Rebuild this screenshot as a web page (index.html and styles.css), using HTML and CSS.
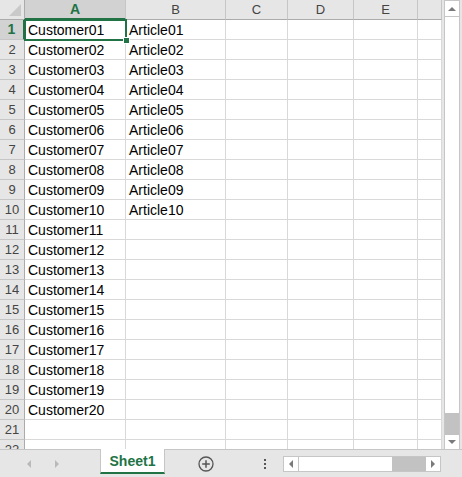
FILE: index.html
```html
<!DOCTYPE html>
<html>
<head>
<meta charset="utf-8">
<link rel="stylesheet" href="styles.css">
</head>
<body>
<div class="app">
  <div class="main">
    <div class="sheet">
      <div class="grid">
        <div class="corner"><span class="tri"></span></div>
        <div class="ch selh">A</div><div class="ch">B</div><div class="ch">C</div><div class="ch">D</div><div class="ch">E</div><div class="ch"></div>

        <div class="rh selr">1</div><div class="c sel">Customer01<span class="selbox"></span></div><div class="c">Article01</div><div class="c"></div><div class="c"></div><div class="c"></div><div class="c"></div>
        <div class="rh">2</div><div class="c">Customer02</div><div class="c">Article02</div><div class="c"></div><div class="c"></div><div class="c"></div><div class="c"></div>
        <div class="rh">3</div><div class="c">Customer03</div><div class="c">Article03</div><div class="c"></div><div class="c"></div><div class="c"></div><div class="c"></div>
        <div class="rh">4</div><div class="c">Customer04</div><div class="c">Article04</div><div class="c"></div><div class="c"></div><div class="c"></div><div class="c"></div>
        <div class="rh">5</div><div class="c">Customer05</div><div class="c">Article05</div><div class="c"></div><div class="c"></div><div class="c"></div><div class="c"></div>
        <div class="rh">6</div><div class="c">Customer06</div><div class="c">Article06</div><div class="c"></div><div class="c"></div><div class="c"></div><div class="c"></div>
        <div class="rh">7</div><div class="c">Customer07</div><div class="c">Article07</div><div class="c"></div><div class="c"></div><div class="c"></div><div class="c"></div>
        <div class="rh">8</div><div class="c">Customer08</div><div class="c">Article08</div><div class="c"></div><div class="c"></div><div class="c"></div><div class="c"></div>
        <div class="rh">9</div><div class="c">Customer09</div><div class="c">Article09</div><div class="c"></div><div class="c"></div><div class="c"></div><div class="c"></div>
        <div class="rh">10</div><div class="c">Customer10</div><div class="c">Article10</div><div class="c"></div><div class="c"></div><div class="c"></div><div class="c"></div>
        <div class="rh">11</div><div class="c">Customer11</div><div class="c"></div><div class="c"></div><div class="c"></div><div class="c"></div><div class="c"></div>
        <div class="rh">12</div><div class="c">Customer12</div><div class="c"></div><div class="c"></div><div class="c"></div><div class="c"></div><div class="c"></div>
        <div class="rh">13</div><div class="c">Customer13</div><div class="c"></div><div class="c"></div><div class="c"></div><div class="c"></div><div class="c"></div>
        <div class="rh">14</div><div class="c">Customer14</div><div class="c"></div><div class="c"></div><div class="c"></div><div class="c"></div><div class="c"></div>
        <div class="rh">15</div><div class="c">Customer15</div><div class="c"></div><div class="c"></div><div class="c"></div><div class="c"></div><div class="c"></div>
        <div class="rh">16</div><div class="c">Customer16</div><div class="c"></div><div class="c"></div><div class="c"></div><div class="c"></div><div class="c"></div>
        <div class="rh">17</div><div class="c">Customer17</div><div class="c"></div><div class="c"></div><div class="c"></div><div class="c"></div><div class="c"></div>
        <div class="rh">18</div><div class="c">Customer18</div><div class="c"></div><div class="c"></div><div class="c"></div><div class="c"></div><div class="c"></div>
        <div class="rh">19</div><div class="c">Customer19</div><div class="c"></div><div class="c"></div><div class="c"></div><div class="c"></div><div class="c"></div>
        <div class="rh">20</div><div class="c">Customer20</div><div class="c"></div><div class="c"></div><div class="c"></div><div class="c"></div><div class="c"></div>
        <div class="rh">21</div><div class="c"></div><div class="c"></div><div class="c"></div><div class="c"></div><div class="c"></div><div class="c"></div>
        <div class="rh">22</div><div class="c"></div><div class="c"></div><div class="c"></div><div class="c"></div><div class="c"></div><div class="c"></div>
      </div>
    </div>
    <div class="vscroll">
      <div class="sbtn up"><span class="arr-up"></span></div>
      <div class="vtrack"></div>
      <div class="vthumb"></div>
      <div class="sbtn down"><span class="arr-down"></span></div>
    </div>
  </div>
  <div class="bottom">
    <div class="nav">
      <span class="arr-left nav-l"></span>
      <span class="arr-right nav-r"></span>
    </div>
    <div class="tab">Sheet1</div>
    <div class="addarea">
      <svg class="plus" width="16" height="16" viewBox="0 0 16 16">
        <circle cx="8" cy="8" r="7" fill="none" stroke="#555" stroke-width="1.3"/>
        <path d="M8 4.2V11.8M4.2 8H11.8" stroke="#555" stroke-width="1.5"/>
      </svg>
    </div>
    <div class="dots"><span></span><span></span><span></span></div>
    <div class="hscroll">
      <div class="hbtn"><span class="arr-left"></span></div>
      <div class="htrack"></div>
      <div class="hthumb"></div>
      <div class="hbtn"><span class="arr-right"></span></div>
    </div>
  </div>
</div>
</body>
</html>
```

FILE: styles.css
```css
html, body {
  margin: 0;
  padding: 0;
  width: 462px;
  height: 477px;
  overflow: hidden;
  background: #e6e6e6;
}
.app {
  width: 462px;
  height: 477px;
  display: flex;
  flex-direction: column;
  font-family: "Liberation Sans", Arial, sans-serif;
}
.main {
  display: flex;
  height: 449px;
}
.sheet {
  width: 442px;
  height: 449px;
  overflow: hidden;
  background: #fff;
}
.grid {
  display: grid;
  grid-template-columns: 25px 101px 100px 62px 66px 64px 24px;
  grid-auto-rows: 20px;
}
.grid > div {
  box-sizing: border-box;
  border-right: 1px solid #d9d9d9;
  border-bottom: 1px solid #d9d9d9;
}
.corner {
  background: #e6e6e6;
  position: relative;
  border-right-color: #ababab !important;
  border-bottom-color: #ababab !important;
}
.tri {
  position: absolute;
  right: 3px;
  bottom: 3px;
  width: 0;
  height: 0;
  border-left: 12px solid transparent;
  border-bottom: 12px solid #c9c9c9;
}
.ch {
  background: #e6e6e6;
  color: #444;
  font-size: 13px;
  text-align: center;
  line-height: 19px;
  border-right-color: #c6c6c6 !important;
  border-bottom-color: #ababab !important;
}
.selh {
  background: #d2d2d2;
  color: #217346;
  font-weight: bold;
  font-size: 14px;
  border-bottom: 2px solid #217346 !important;
  line-height: 18px;
}
.rh {
  background: #e6e6e6;
  color: #444;
  font-size: 13px;
  text-align: center;
  line-height: 19px;
  border-right-color: #ababab !important;
  border-bottom-color: #c6c6c6 !important;
}
.selr {
  background: #d2d2d2;
  color: #217346;
  font-weight: bold;
  font-size: 14px;
  border-right: 2px solid #217346 !important;
}
.c {
  font-size: 14px;
  color: #000;
  padding-left: 3px;
  line-height: 20px;
  white-space: nowrap;
  overflow: visible;
}
.sel {
  position: relative;
}
.selbox {
  position: absolute;
  left: -1px;
  top: -1px;
  right: -2px;
  bottom: -2px;
  border: 2px solid #217346;
}
.selbox::after {
  content: "";
  position: absolute;
  right: -5px;
  bottom: -5px;
  width: 5px;
  height: 5px;
  background: #217346;
  border: 1px solid #fff;
}
.vscroll {
  width: 16px;
  margin-left: 2px;
  height: 449px;
  display: flex;
  flex-direction: column;
  box-sizing: border-box;
  border: 1px solid #c6c6c6;
  border-bottom: none;
  background: #fff;
}
.sbtn {
  height: 15px;
  display: flex;
  align-items: center;
  justify-content: center;
  background: #fff;
}
.up { border-bottom: 1px solid #c6c6c6; }
.down { height: 14px; }
.vtrack { flex: 1; background: #fff; }
.vthumb { height: 22px; background: #c2c2c2; }
.arr-up {
  width: 0; height: 0;
  border-left: 4px solid transparent;
  border-right: 4px solid transparent;
  border-bottom: 4px solid #7a7a7a;
}
.arr-down {
  width: 0; height: 0;
  border-left: 4px solid transparent;
  border-right: 4px solid transparent;
  border-top: 4px solid #7a7a7a;
}
.arr-left {
  width: 0; height: 0;
  border-top: 4px solid transparent;
  border-bottom: 4px solid transparent;
  border-right: 4px solid #7a7a7a;
}
.arr-right {
  width: 0; height: 0;
  border-top: 4px solid transparent;
  border-bottom: 4px solid transparent;
  border-left: 4px solid #7a7a7a;
}
.bottom {
  height: 28px;
  box-sizing: border-box;
  border-top: 1px solid #c6c6c6;
  display: flex;
  align-items: flex-start;
}
.nav {
  width: 100px;
  height: 27px;
  display: flex;
  align-items: center;
  padding-left: 27px;
  box-sizing: border-box;
  gap: 24px;
}
.nav .arr-left, .nav .arr-right {
  border-right-color: #b9b9b9;
  border-left-color: #b9b9b9;
}
.tab {
  width: 65px;
  height: 25px;
  margin-top: -1px;
  box-sizing: border-box;
  background: #fff;
  color: #217346;
  font-weight: bold;
  font-size: 14px;
  text-align: center;
  line-height: 24px;
  border-bottom: 2px solid #217346;
  border-left: 1px solid #c6c6c6;
  border-right: 1px solid #c6c6c6;
}
.addarea {
  width: 82px;
  height: 27px;
  display: flex;
  align-items: center;
  justify-content: center;
}
.dots {
  width: 36px;
  height: 27px;
  display: flex;
  flex-direction: column;
  align-items: center;
  justify-content: center;
  gap: 2px;
}
.dots span {
  width: 2px;
  height: 2px;
  background: #555;
}
.hscroll {
  margin-top: 6px;
  width: 158px;
  height: 16px;
  box-sizing: border-box;
  border: 1px solid #c6c6c6;
  background: #fff;
  display: flex;
}
.hbtn {
  width: 14px;
  display: flex;
  align-items: center;
  justify-content: center;
}
.hbtn:first-child { border-right: 1px solid #c6c6c6; }
.htrack { flex: 1; }
.hthumb { width: 34px; background: #c2c2c2; }
```
